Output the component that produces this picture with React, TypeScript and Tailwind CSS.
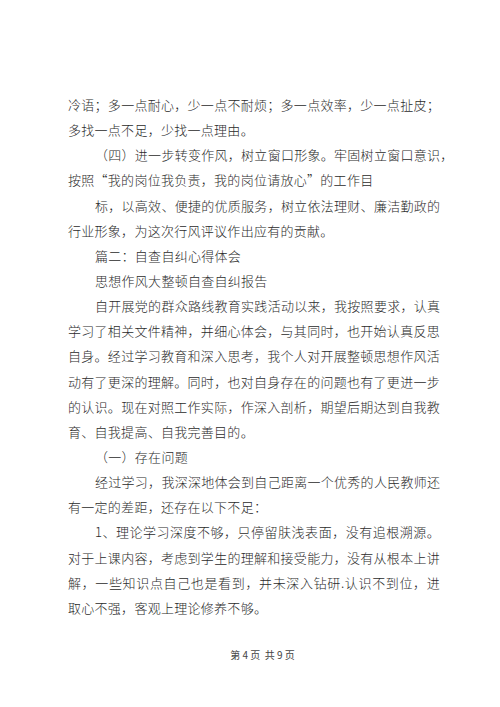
const lines: { text: string; indent?: boolean; full?: boolean }[] = [
  { text: "冷语；多一点耐心，少一点不耐烦；多一点效率，少一点扯皮；", full: true },
  { text: "多找一点不足，少找一点理由。" },
  { text: "（四）进一步转变作风，树立窗口形象。牢固树立窗口意识，", indent: true, full: true },
  { text: "按照“我的岗位我负责，我的岗位请放心”的工作目" },
  { text: "标，以高效、便捷的优质服务，树立依法理财、廉洁勤政的", indent: true, full: true },
  { text: "行业形象，为这次行风评议作出应有的贡献。" },
  { text: "篇二：自查自纠心得体会", indent: true },
  { text: "思想作风大整顿自查自纠报告", indent: true },
  { text: "自开展党的群众路线教育实践活动以来，我按照要求，认真", indent: true, full: true },
  { text: "学习了相关文件精神，并细心体会，与其同时，也开始认真反思", full: true },
  { text: "自身。经过学习教育和深入思考，我个人对开展整顿思想作风活", full: true },
  { text: "动有了更深的理解。同时，也对自身存在的问题也有了更进一步", full: true },
  { text: "的认识。现在对照工作实际，作深入剖析，期望后期达到自我教", full: true },
  { text: "育、自我提高、自我完善目的。" },
  { text: "（一）存在问题", indent: true },
  { text: "经过学习，我深深地体会到自己距离一个优秀的人民教师还", indent: true, full: true },
  { text: "有一定的差距，还存在以下不足：" },
  { text: "1、理论学习深度不够，只停留肤浅表面，没有追根溯源。", indent: true, full: true },
  { text: "对于上课内容，考虑到学生的理解和接受能力，没有从根本上讲", full: true },
  { text: "解，一些知识点自己也是看到，并未深入钻研.认识不到位，进", full: true },
  { text: "取心不强，客观上理论修养不够。" },
];

export default function App() {
  return (
    <div className="w-[500px] h-[707px] bg-white overflow-hidden font-['Noto_Sans_CJK_SC','Noto_Sans',sans-serif] text-[#2b2b2b]">
      <div className="pt-[92px] ml-[68px] w-[372px]">
        {lines.map((l, i) => (
          <p
            key={i}
            className={
              "h-[25.15px] leading-[25.15px] text-[13px] tracking-[0.28px] font-light whitespace-nowrap " +
              (l.indent ? "pl-[27px] " : "") +
              (l.full ? "text-justify [text-align-last:justify]" : "text-left")
            }
          >
            {l.text}
          </p>
        ))}
      </div>
      <div className="mt-[28px] flex justify-center pl-[25px] text-[10px] leading-[14px] text-[#444]">
        <span className="whitespace-pre">第 4 页  共 9 页</span>
      </div>
    </div>
  );
}
